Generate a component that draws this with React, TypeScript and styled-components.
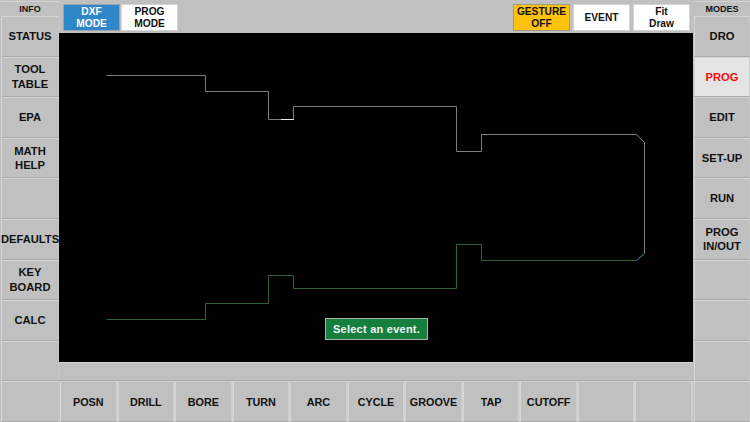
import styled, { createGlobalStyle } from 'styled-components'

const GlobalStyle = createGlobalStyle`
    html, body { margin: 0; padding: 0; background: #c0c0c0; }
    body { font-family: "Liberation Sans", Arial, sans-serif; }
`

const Screen = styled.div`
    width: 750px;
    height: 422px;
    display: grid;
    grid-template-columns: 59px 634px 57px;
    grid-template-rows: 1fr;
    background: #c0c0c0;
    overflow: hidden;
`

const SideColumn = styled.div`
    display: flex;
    flex-direction: column;
    padding: 1px 0 0 1px;
`

const SideTitle = styled.div`
    height: 15px;
    display: flex;
    align-items: center;
    justify-content: center;
    font-size: 9px;
    font-weight: bold;
    color: #111;
    background: #c0c0c0;
    border-top: 1px solid #d4d4d4;
    box-sizing: border-box;
`

const SideButton = styled.div<{ $active?: boolean }>`
    height: 40.6px;
    box-sizing: border-box;
    display: flex;
    align-items: center;
    justify-content: center;
    text-align: center;
    font-size: 11.2px;
    line-height: 14.5px;
    font-weight: bold;
    white-space: nowrap;
    color: ${p => (p.$active ? '#f01010' : '#111')};
    background: ${p => (p.$active ? '#e4e4e4' : '#c0c0c0')};
    border: 1px solid;
    border-color: #d6d6d6 #c8c8c8 #a9a9a9 #d6d6d6;
`

const Centre = styled.div`
    display: flex;
    flex-direction: column;
    min-width: 0;
`

const TopBar = styled.div`
    height: 33px;
    flex: none;
    display: flex;
    align-items: center;
    gap: 1px;
    padding: 4px 3px 2px 4px;
    box-sizing: border-box;
`

const Spacer = styled.div`
    flex: 1;
`

const ModeButton = styled.div<{ $fill?: string; $color?: string; $edge?: string; $gapLeft?: number }>`
    width: 57px;
    height: 27px;
    box-sizing: border-box;
    display: flex;
    align-items: center;
    justify-content: center;
    text-align: center;
    font-size: 10.2px;
    line-height: 11.5px;
    font-weight: bold;
    color: ${p => p.$color ?? '#111'};
    background: ${p => p.$fill ?? '#fff'};
    border: 1px solid ${p => p.$edge ?? '#d4d4d4'};
    margin-left: ${p => p.$gapLeft ?? 0}px;
`

const Canvas = styled.div`
    position: relative;
    height: 329px;
    flex: none;
    background: #000;
`

const Drawing = styled.svg`
    display: block;
    width: 634px;
    height: 329px;
`

const Message = styled.div`
    position: absolute;
    left: 266px;
    top: 285px;
    width: 103px;
    height: 22px;
    box-sizing: border-box;
    display: flex;
    align-items: center;
    justify-content: center;
    background: #15803d;
    border: 1px solid #a8b0a8;
    color: #f4f4f4;
    font-size: 11px;
    font-weight: bold;
    letter-spacing: 0.25px;
`

const StatusBar = styled.div`
    height: 19px;
    flex: none;
    box-sizing: border-box;
    border-top: 1px solid #d4d4d4;
    border-bottom: 1px solid #a9a9a9;
`

const BottomBar = styled.div`
    flex: 1;
    display: grid;
    grid-template-columns: repeat(11, 1fr);
    padding-left: 1px;
`

const BottomButton = styled.div`
    box-sizing: border-box;
    display: flex;
    align-items: center;
    justify-content: center;
    font-size: 10.8px;
    font-weight: bold;
    color: #111;
    border: 1px solid;
    border-color: #d0d0d0 #a9a9a9 #a9a9a9 #d6d6d6;
    border-right: 2px solid #d0d0d0;
    height: 41px;
`

const leftButtons = ['STATUS', 'TOOL\nTABLE', 'EPA', 'MATH\nHELP', '', 'DEFAULTS', 'KEY\nBOARD', 'CALC', '', '']
const rightButtons = ['DRO', 'PROG', 'EDIT', 'SET-UP', 'RUN', 'PROG\nIN/OUT', '', '', '', '']
const bottomButtons = ['POSN', 'DRILL', 'BORE', 'TURN', 'ARC', 'CYCLE', 'GROOVE', 'TAP', 'CUTOFF', '', '']

// drawing coordinates are relative to the canvas (screen x - 59, y - 33)
const upperProfile = '48,42 147,42 147,58 210,58 210,86 235,86 235,73 398,73 398,118 423,118 423,101 578,101 586,109 586,220'
const lowerProfile = '586,220 578,227 423,227 423,211 398,211 398,255 235,255 235,242 210,242 210,270 147,270 147,286 48,286'

const renderLines = (label: string) => (
    <span>
        {label.split('\n').map((line, index) => (
            <span key={'line-' + index}>
                {index > 0 && <br />}
                {line}
            </span>
        ))}
    </span>
)

export default function App() {
    return (
        <Screen>
            <GlobalStyle />
            <SideColumn>
                <SideTitle>INFO</SideTitle>
                {leftButtons.map((label, index) => (
                    <SideButton key={'left-' + index}>{renderLines(label)}</SideButton>
                ))}
            </SideColumn>
            <Centre>
                <TopBar>
                    <ModeButton $fill="#2f86c8" $color="#fff" $edge="#9aa4aa"><span>DXF<br />MODE</span></ModeButton>
                    <ModeButton><span>PROG<br />MODE</span></ModeButton>
                    <Spacer />
                    <ModeButton $fill="#ffc20e" $edge="#a09a80"><span>GESTURE<br />OFF</span></ModeButton>
                    <ModeButton $gapLeft={2}>EVENT</ModeButton>
                    <ModeButton $gapLeft={2}><span>Fit<br />Draw</span></ModeButton>
                </TopBar>
                <Canvas>
                    <Drawing viewBox="0 0 634 329">
                        <polyline points={upperProfile} fill="none" stroke="#7c7c7c" strokeWidth="1" transform="translate(-0.5 0.5)" />
                        <polyline points={lowerProfile} fill="none" stroke="#2f6336" strokeWidth="1" transform="translate(-0.5 0.5)" />
                        <line x1="222" y1="86.5" x2="235" y2="86.5" stroke="#e8e8e8" strokeWidth="1" />
                        <line x1="585.5" y1="220.5" x2="577.5" y2="227.5" stroke="#2f6f9f" strokeWidth="1" />
                    </Drawing>
                    <Message>Select an event.</Message>
                </Canvas>
                <StatusBar />
                <BottomBar>
                    {bottomButtons.map((label, index) => (
                        <BottomButton key={'bottom-' + index}>{label}</BottomButton>
                    ))}
                </BottomBar>
            </Centre>
            <SideColumn>
                <SideTitle>MODES</SideTitle>
                {rightButtons.map((label, index) => (
                    <SideButton key={'right-' + index} $active={label === 'PROG'}>{renderLines(label)}</SideButton>
                ))}
            </SideColumn>
        </Screen>
    )
}
